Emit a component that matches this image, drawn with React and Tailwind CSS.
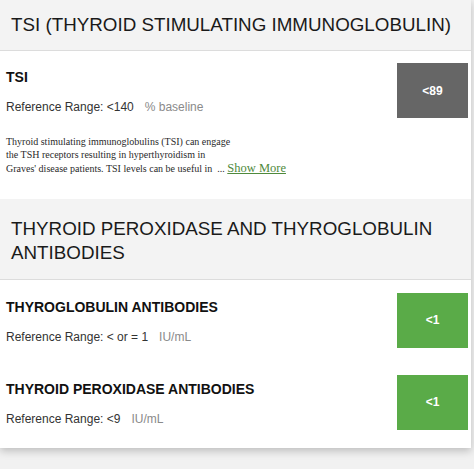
import React from 'react';

const sans = { fontFamily: '"Liberation Sans", Arial, sans-serif' };

const SectionHeader = ({ title, className = '' }) => (
  <div className={`bg-[#f3f3f3] border-b border-[#dcdcdc] pl-[11px] pr-[8px] ${className}`}>
    <h2 className="text-[18.8px] leading-[24px] text-[#1a1a1a] font-normal">{title}</h2>
  </div>
);

const ResultBox = ({ value, color }) => (
  <div className={`w-[71px] h-[55px] shrink-0 flex items-center justify-center ${color}`}>
    <span className="text-white font-bold text-[12px]">{value}</span>
  </div>
);

const ResultRow = ({ name, range, unit, value, color, className = '', children }) => (
  <div className={`flex items-start justify-between pl-[6px] pr-[3px] ${className}`}>
    <div className="pt-[5px]">
      <h3 className="text-[14px] leading-[18px] font-bold text-[#111]">{name}</h3>
      <div className="mt-[13px] text-[12px] leading-[16px] text-[#333]">
        <span>Reference Range: {range}</span>
        <span className="ml-[11px] text-[#8a8a8a]">{unit}</span>
      </div>
      {children}
    </div>
    <ResultBox value={value} color={color} />
  </div>
);

const App = () => {
  return (
    <div className="min-h-screen bg-[#f1f1f1]" style={sans}>
      <div className="w-[471px] bg-white shadow-[0_3px_8px_rgba(0,0,0,0.22)]">
        <SectionHeader title="TSI (THYROID STIMULATING IMMUNOGLOBULIN)" className="pt-[13px] pb-[13px]" />

        <ResultRow
          name="TSI"
          range="<140"
          unit="% baseline"
          value="<89"
          color="bg-[#666666]"
          className="pt-[12px] pb-[24px]"
        >
          <p
            className="mt-[20px] text-[10px] leading-[13.3px] text-[#2a2a2a]"
            style={{ fontFamily: '"Liberation Serif", "Times New Roman", serif' }}
          >
            Thyroid stimulating immunoglobulins (TSI) can engage
            <br />
            the TSH receptors resulting in hyperthyroidism in
            <br />
            Graves' disease patients. TSI levels can be useful in&nbsp; ...{' '}
            <a href="#" className="text-[12.5px] leading-[13.3px] text-[#4f8a3c] underline">
              Show More
            </a>
          </p>
        </ResultRow>

        <SectionHeader title="THYROID PEROXIDASE AND THYROGLOBULIN ANTIBODIES" className="pt-[18px] pb-[14px]" />

        <ResultRow
          name="THYROGLOBULIN ANTIBODIES"
          range="< or = 1"
          unit="IU/mL"
          value="<1"
          color="bg-[#5aab48]"
          className="pt-[13px]"
        />
        <ResultRow
          name="THYROID PEROXIDASE ANTIBODIES"
          range="<9"
          unit="IU/mL"
          value="<1"
          color="bg-[#5aab48]"
          className="pt-[27px] pb-[18px]"
        />
      </div>
    </div>
  );
};

export default App;
